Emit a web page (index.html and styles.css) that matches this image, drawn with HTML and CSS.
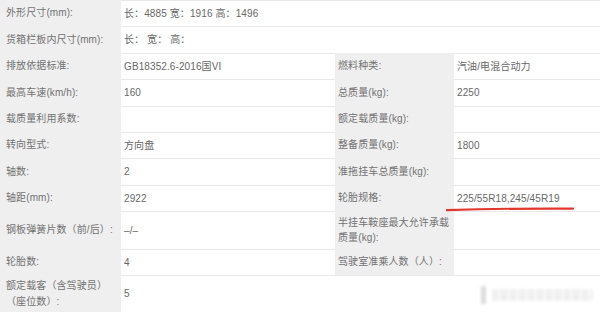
FILE: index.html
```html
<!DOCTYPE html>
<html lang="zh-CN">
<head>
<meta charset="utf-8">
<title>车辆参数</title>
<link rel="stylesheet" href="styles.css">
</head>
<body>
<div class="page">
  <div class="sheet">
    <div class="cell label">外形尺寸(mm):</div>
    <div class="cell value wide">长：4885 宽：1916 高：1496</div>

    <div class="cell label">货箱栏板内尺寸(mm):</div>
    <div class="cell value wide">长：&nbsp;宽：&nbsp;高：</div>

    <div class="cell label">排放依据标准:</div>
    <div class="cell value">GB18352.6-2016国VI</div>
    <div class="cell label right">燃料种类:</div>
    <div class="cell value">汽油/电混合动力</div>

    <div class="cell label">最高车速(km/h):</div>
    <div class="cell value">160</div>
    <div class="cell label right">总质量(kg):</div>
    <div class="cell value">2250</div>

    <div class="cell label">载质量利用系数:</div>
    <div class="cell value"></div>
    <div class="cell label right">额定载质量(kg):</div>
    <div class="cell value"></div>

    <div class="cell label">转向型式:</div>
    <div class="cell value">方向盘</div>
    <div class="cell label right">整备质量(kg):</div>
    <div class="cell value">1800</div>

    <div class="cell label">轴数:</div>
    <div class="cell value">2</div>
    <div class="cell label right">准拖挂车总质量(kg):</div>
    <div class="cell value"></div>

    <div class="cell label">轴距(mm):</div>
    <div class="cell value">2922</div>
    <div class="cell label right">轮胎规格:</div>
    <div class="cell value">225/55R18,245/45R19</div>

    <div class="cell label">钢板弹簧片数（前/后）:</div>
    <div class="cell value">–/–</div>
    <div class="cell label right">半挂车鞍座最大允许承载质量(kg):</div>
    <div class="cell value"></div>

    <div class="cell label">轮胎数:</div>
    <div class="cell value">4</div>
    <div class="cell label right">驾驶室准乘人数（人）:</div>
    <div class="cell value"></div>

    <div class="cell label">额定载客（含驾驶员）（座位数）:</div>
    <div class="cell value">5</div>
    <div class="cell value span2"></div>
  </div>

  <svg class="mark" width="600" height="313" viewBox="0 0 600 313" aria-hidden="true">
    <path d="M447 210.2 Q 505 208.2 573 208.6" fill="none" stroke="#e2372c" stroke-width="2.2" stroke-linecap="round"/>
  </svg>

  <div class="watermark">
    <span class="wm-bar"></span>
    <span class="wm-blot"></span>
  </div>
</div>
</body>
</html>
```

FILE: styles.css
```css
* {
  box-sizing: border-box;
}

html, body {
  margin: 0;
  padding: 0;
  background: #ffffff;
}

body {
  font-family: "Liberation Sans", "Noto Sans CJK SC", sans-serif;
  font-size: 10px;
  letter-spacing: 0.1px;
  color: #6a6a6a;
}

.page {
  position: relative;
  width: 600px;
  height: 313px;
  overflow: hidden;
}

.sheet {
  display: grid;
  grid-template-columns: 121px 214px 119px 146px;
  grid-template-rows: 26px 27px 26px 27px 26px 26px 27px 26px 38px 26px 37px;
}

.cell {
  display: flex;
  align-items: center;
  line-height: 15.5px;
}

.label {
  background: #efefef;
  color: #727272;
  padding: 0 4px 0 6px;
}

.label.right {
  padding-left: 3px;
}

.value {
  background: #ffffff;
  border-top: 1px solid #e9e9e9;
  padding-left: 3px;
  color: #686868;
}

.wide {
  grid-column: span 3;
}

.span2 {
  grid-column: span 2;
}

.mark {
  position: absolute;
  left: 0;
  top: 0;
}

.watermark {
  position: absolute;
  left: 481px;
  top: 285px;
  width: 112px;
  height: 20px;
  display: flex;
  align-items: center;
  gap: 6px;
  filter: blur(1.5px);
  opacity: 0.6;
}

.wm-bar {
  width: 5px;
  height: 18px;
  background: #c4c4c4;
}

.wm-blot {
  flex: 1;
  height: 12px;
  background: repeating-linear-gradient(90deg, #e6e6e6 0 6px, #f4f4f4 6px 9px);
}
```
